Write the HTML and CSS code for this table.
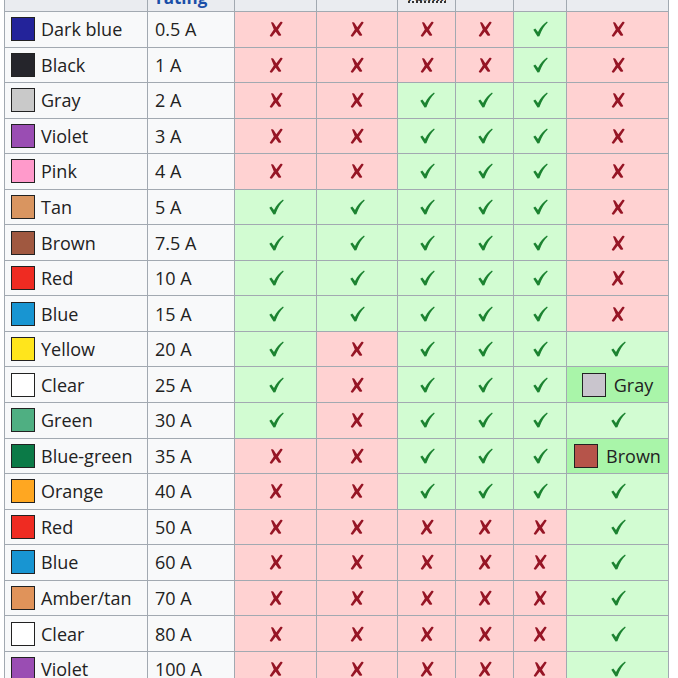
FILE: index.html
```html
<!DOCTYPE html>
<html>
<head>
<meta charset="utf-8">
<link rel="stylesheet" href="styles.css">
</head>
<body>
<table class="fuses">
<colgroup>
<col class="c-color"><col class="c-rating"><col class="c-m2"><col class="c-m3"><col class="c-lp"><col class="c-mini"><col class="c-reg"><col class="c-maxi">
</colgroup>
<thead>
<tr>
<th class="top">Color</th>
<th class="left">Current<br>rating</th>
<th class="top">Micro2</th>
<th class="top">Micro3</th>
<th class="lp"><abbr>&#8203;LP-mini</abbr></th>
<th class="top">Mini</th>
<th class="top">Regular</th>
<th class="top">Maxi</th>
</tr>
</thead>
<tbody id="rows"></tbody>
</table>
<script src="script.js"></script>
</body>
</html>
```
FILE: styles.css
```css
html, body {
  margin: 0;
  padding: 0;
  background: #ffffff;
  overflow: hidden;
}
body {
  font-family: "Open Sans", "Noto Sans", sans-serif;
  color: #222;
}
.fuses {
  border-collapse: collapse;
  margin: -38px 0 0 4px;
  table-layout: fixed;
  width: 665px;
}
.c-color { width: 143px; }
.c-rating { width: 87px; }
.c-m2 { width: 82px; }
.c-m3 { width: 81px; }
.c-lp { width: 58px; }
.c-mini { width: 58px; }
.c-reg { width: 53px; }
.c-maxi { width: 102px; }

.fuses th {
  background: #eaecf0;
  border: 1px solid #a2a9b1;
  height: 40px;
  padding: 0 2px 5px;
  vertical-align: bottom;
  font-size: 15px;
  line-height: 15px;
  font-weight: bold;
  color: #1a4fa8;
  text-align: center;
  white-space: nowrap;
  overflow: hidden;
}
.fuses th.top { vertical-align: top; padding-top: 1px; }
.fuses th.left { text-align: left; padding-left: 8px; font-size: 17px; line-height: 17px; }
.fuses th.lp { padding-bottom: 8px; font-size: 13px; line-height: 13px; }
.fuses th abbr {
  display: inline-block;
  text-decoration: none;
  color: #333;
  border-bottom: 2px dotted #333;
  line-height: 1px;
  height: 1px;
  overflow: hidden;
  vertical-align: bottom;
  width: 38px;
}
.fuses td {
  border: 1px solid #a2a9b1;
  height: 34.55px;
  padding: 0;
  font-size: 18px;
  line-height: 20px;
  background: #f8f9fa;
  white-space: nowrap;
}
.name {
  display: flex;
  align-items: center;
  gap: 6px;
  padding-left: 6px;
}
.sw {
  width: 22px;
  height: 22px;
  border: 1.5px solid #222;
  flex: none;
}
.rating { padding-left: 7px !important; }
.no, .yes {
  text-align: center;
  line-height: 1;
}
.mk { display: block; margin: 0 auto; }
.no { background: #ffd2d2 !important; }
.yes { background: #d2fcd2 !important; }
.hl { background: #a9f5a9 !important; }
.hl .name { justify-content: center; padding-left: 0; gap: 8px; }
```
FILE: script.js
```js
var colors = {
  darkblue: '#23239a', black: '#25252b', gray: '#c9c9c9', violet: '#9a4db3',
  pink: '#ff9acb', tan: '#d99560', brown: '#a05840', red: '#ef2b22',
  blue: '#1895d2', yellow: '#ffe51c', clear: '#ffffff', green: '#4faf82',
  bluegreen: '#0b7a47', orange: '#ffa721', amber: '#e0935a',
  mgray: '#c9c5cd', mbrown: '#b6544a'
};
var rows = [
  ['Dark blue', 'darkblue', '0.5 A', '00001', '0'],
  ['Black', 'black', '1 A', '00001', '0'],
  ['Gray', 'gray', '2 A', '00111', '0'],
  ['Violet', 'violet', '3 A', '00111', '0'],
  ['Pink', 'pink', '4 A', '00111', '0'],
  ['Tan', 'tan', '5 A', '11111', '0'],
  ['Brown', 'brown', '7.5 A', '11111', '0'],
  ['Red', 'red', '10 A', '11111', '0'],
  ['Blue', 'blue', '15 A', '11111', '0'],
  ['Yellow', 'yellow', '20 A', '10111', '1'],
  ['Clear', 'clear', '25 A', '10111', 'Gray:mgray'],
  ['Green', 'green', '30 A', '10111', '1'],
  ['Blue-green', 'bluegreen', '35 A', '00111', 'Brown:mbrown'],
  ['Orange', 'orange', '40 A', '00111', '1'],
  ['Red', 'red', '50 A', '00000', '1'],
  ['Blue', 'blue', '60 A', '00000', '1'],
  ['Amber/tan', 'amber', '70 A', '00000', '1'],
  ['Clear', 'clear', '80 A', '00000', '1'],
  ['Violet', 'violet', '100 A', '00000', '1']
];
var YES = '<svg class="mk" width="18" height="18" viewBox="0 0 18 18"><path d="M2.3 9.8 L4.3 8.6 L7 12 C9.5 7.3 12.5 3.9 16 1.6 L16.7 2.6 C13.4 5.5 10.8 9.7 8.4 16.2 L6.5 16.5 Z" fill="#1c8331"/></svg>';
var NO = '<svg class="mk" width="18" height="18" viewBox="0 0 18 18"><path d="M4 2.5 C5.2 2 6.3 2.3 6.9 3.4 L9.3 7.3 L13.3 2 C14.3 1.6 15.4 2 15.6 2.8 L11 9.7 L14.3 15 C13.4 16 12 16.2 11.2 15.3 L8.7 11.8 L5 16.6 C3.9 17 2.7 16.4 2.8 15.6 L6.8 9.5 Z" fill="#961525"/></svg>';
function mark(v) {
  return v === '1' ? '<td class="yes">' + YES + '</td>' : '<td class="no">' + NO + '</td>';
}
var html = '';
rows.forEach(function (r) {
  var s = '<tr><td><div class="name"><span class="sw" style="background:' + colors[r[1]] + '"></span>' + r[0] + '</div></td>';
  s += '<td class="rating">' + r[2] + '</td>';
  for (var i = 0; i < 5; i++) s += mark(r[3][i]);
  if (r[4].indexOf(':') > 0) {
    var p = r[4].split(':');
    s += '<td class="hl"><div class="name"><span class="sw" style="background:' + colors[p[1]] + '"></span>' + p[0] + '</div></td>';
  } else {
    s += mark(r[4]);
  }
  s += '</tr>';
  html += s;
});
document.getElementById('rows').innerHTML = html;
```
